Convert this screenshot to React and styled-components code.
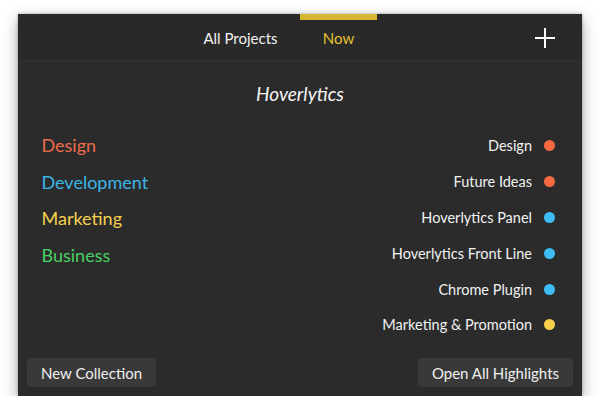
import React from "react";
import styled, { createGlobalStyle } from "styled-components";

const Global = createGlobalStyle`
  html, body { margin: 0; padding: 0; background: #ffffff; }
  body { font-family: Lato, "Noto Sans", sans-serif; -webkit-font-smoothing: antialiased; }
`;

const Page = styled.div`
  padding: 14px 18px 0 18px;
`;

const Panel = styled.div`
  width: 564px;
  height: 382px;
  background: #2b2b2b;
  box-shadow: 0 5px 14px rgba(0, 0, 0, 0.35), 0 0 3px rgba(0, 0, 0, 0.25);
  display: flex;
  flex-direction: column;
  color: #f2f2f2;
`;

const Header = styled.div`
  height: 46px;
  display: flex;
  align-items: stretch;
  padding-left: 164px;
  padding-right: 26px;
  background: #292929;
  border-bottom: 1px solid #333333;
`;

const Tab = styled.div`
  width: ${(p) => p.$w}px;
  display: flex;
  align-items: center;
  justify-content: center;
  padding-top: 2px;
  box-sizing: border-box;
  box-shadow: ${(p) => (p.$active ? "inset 0 6px 0 #d6b62e" : "none")};
  font-size: 15px;
  color: ${(p) => (p.$active ? "#e6c32f" : "#f2f2f2")};
  margin-left: ${(p) => p.$ml || 0}px;
`;

const PlusButton = styled.div`
  margin-left: auto;
  display: flex;
  align-items: center;
  padding-top: 2px;
`;

const Title = styled.div`
  margin-top: 20px;
  height: 26px;
  line-height: 26px;
  text-align: center;
  font-style: italic;
  font-size: 19px;
  color: #f4f4f4;
`;

const Columns = styled.div`
  flex: 1;
  display: flex;
  justify-content: space-between;
  align-items: flex-start;
  padding: 21px 27px 0 23.5px;
`;

const LeftList = styled.div`
  display: flex;
  flex-direction: column;
  margin-top: -1px;
`;

const Category = styled.div`
  height: 36.7px;
  line-height: 36.7px;
  font-size: 18px;
  color: ${(p) => p.$color};
`;

const RightList = styled.div`
  display: flex;
  flex-direction: column;
  align-items: flex-end;
`;

const Item = styled.div`
  height: 35.8px;
  display: flex;
  align-items: center;
  gap: 12px;
  font-size: 14.5px;
  color: #f2f2f2;
`;

const Dot = styled.span`
  width: 11px;
  height: 11px;
  border-radius: 50%;
  background: ${(p) => p.$color};
`;

const Footer = styled.div`
  display: flex;
  justify-content: space-between;
  padding: 0 9px 9px 9px;
`;

const Button = styled.div`
  height: 29px;
  padding: 0 14px;
  display: flex;
  align-items: center;
  background: #393939;
  border-radius: 4px;
  font-size: 15px;
  color: #f0f0f0;
`;

const left = [
  ["Design", "#ee6b4c"],
  ["Development", "#3cb6e8"],
  ["Marketing", "#f4d04b"],
  ["Business", "#48d262"],
];

const right = [
  ["Design", "#f4693f"],
  ["Future Ideas", "#f4693f"],
  ["Hoverlytics Panel", "#3dbcf6"],
  ["Hoverlytics Front Line", "#3dbcf6"],
  ["Chrome Plugin", "#3dbcf6"],
  ["Marketing & Promotion", "#f8d04c"],
];

export default function App() {
  return (
    <Page>
      <Global />
      <Panel>
        <Header>
          <Tab $w={117}>All Projects</Tab>
          <Tab $w={77} $ml={1} $active>
            Now
          </Tab>
          <PlusButton>
            <svg width="22" height="22" viewBox="0 0 22 22">
              <path d="M11 1 V21 M1 11 H21" stroke="#ffffff" strokeWidth="2" fill="none" />
            </svg>
          </PlusButton>
        </Header>
        <Title>Hoverlytics</Title>
        <Columns>
          <LeftList>
            {left.map(([t, c]) => (
              <Category key={t} $color={c}>
                {t}
              </Category>
            ))}
          </LeftList>
          <RightList>
            {right.map(([t, c]) => (
              <Item key={t}>
                {t}
                <Dot $color={c} />
              </Item>
            ))}
          </RightList>
        </Columns>
        <Footer>
          <Button>New Collection</Button>
          <Button>Open All Highlights</Button>
        </Footer>
      </Panel>
    </Page>
  );
}
